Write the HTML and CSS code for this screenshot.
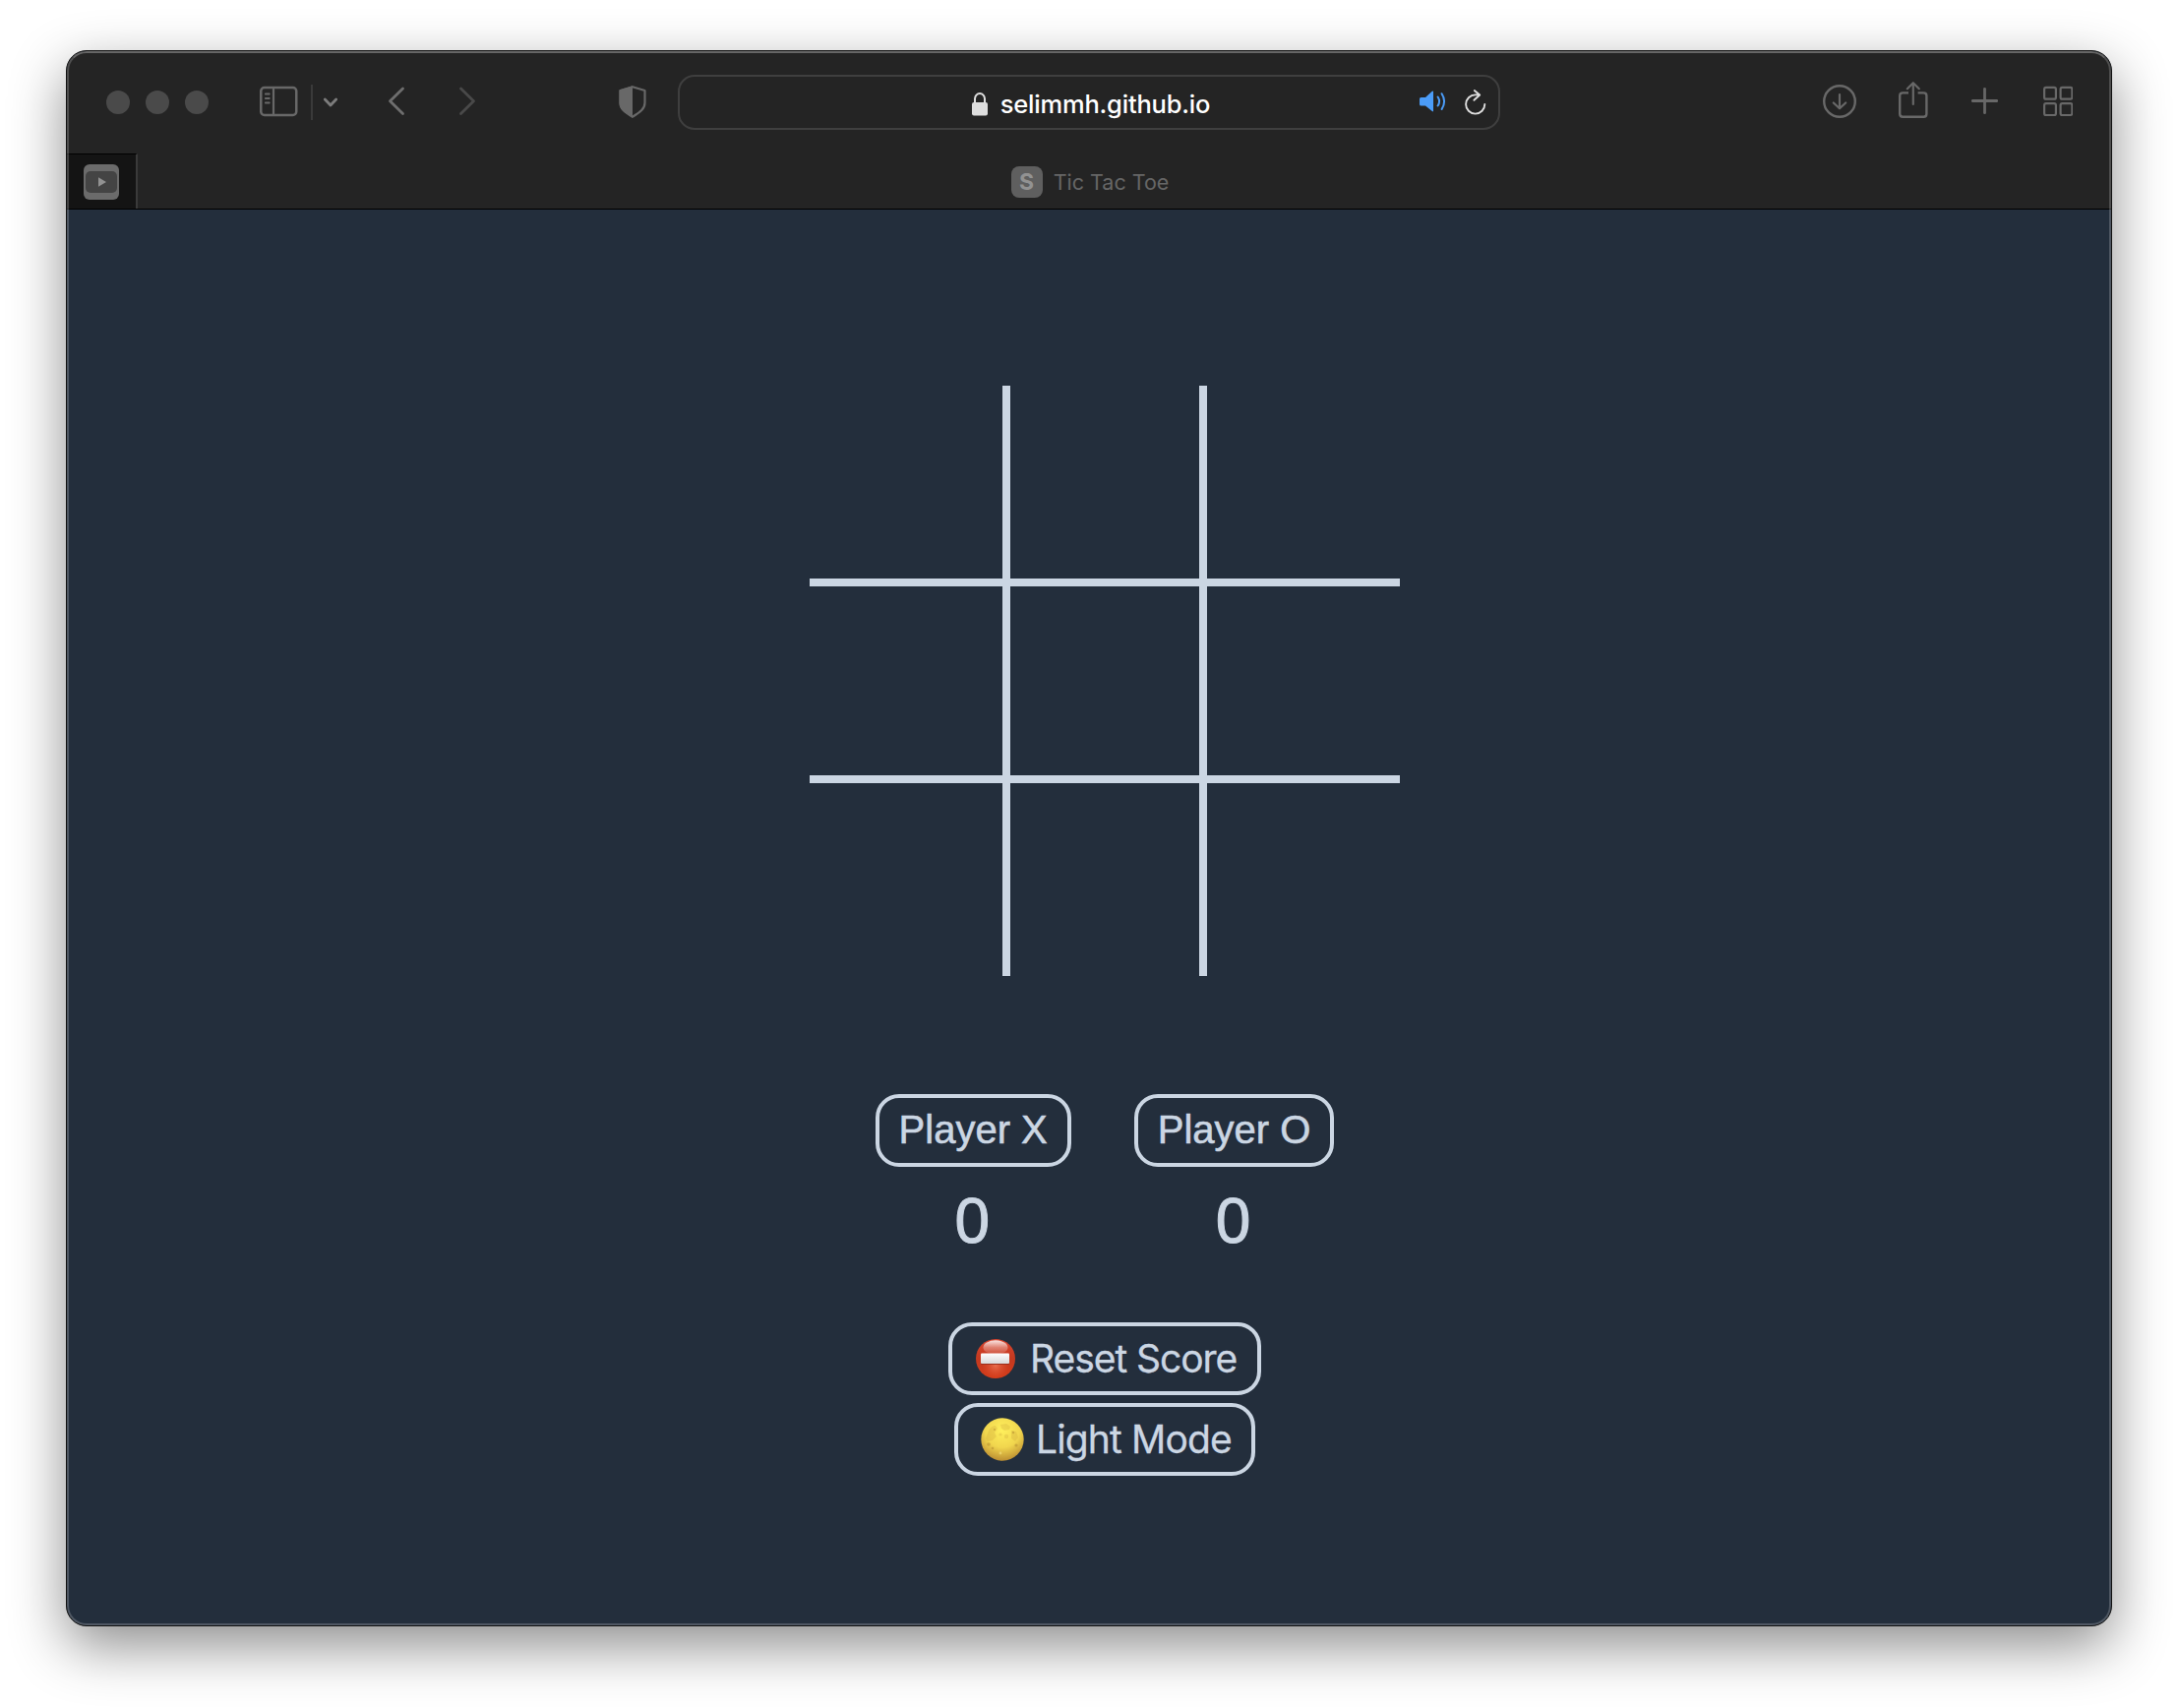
FILE: index.html
```html
<!DOCTYPE html>
<html lang="en">
<head>
<meta charset="utf-8">
<title>Tic Tac Toe</title>
<link rel="stylesheet" href="styles.css">
</head>
<body>
<div class="window">
  <header class="toolbar">
    <div class="lights"><span class="light"></span><span class="light"></span><span class="light"></span></div>
    <svg class="icon sidebar" width="39" height="48" viewBox="0 0 39 48">
      <rect x="1.25" y="9" width="36" height="28" rx="3.5" stroke-width="2.5"/>
      <path d="M14 9v28" stroke-width="2.2"/>
      <path d="M5.8 15.5h4M5.8 20h4M5.8 24.5h4" stroke-width="1.8"/>
    </svg>
    <span class="divider"></span>
    <svg class="icon chevron" width="16" height="48" viewBox="0 0 16 48"><path d="M2.3 21l5.7 6 5.7-6" stroke-width="2.8"/></svg>
    <svg class="icon back" width="18" height="48" viewBox="0 0 18 48"><path d="M15.500 10L2.500 22.800l13 12.800" stroke-width="2.800"/></svg>
    <svg class="icon forward" width="18" height="48" viewBox="0 0 18 48"><path d="M2.500 10l13 12.800-13 12.800" stroke-width="2.800"/></svg>
    <svg class="icon shield" width="28" height="48" viewBox="0 0 28 48">
      <path d="M14 8.300L26.500 12v12.500c0 6-4.500 9.500-12.500 14.200C6 34 1.500 30.500 1.500 24.500V12z" stroke-width="2.200"/>
      <path d="M14 7.300L.5 11.500v13C.5 31.500 6 35 14 39.800z" class="solid"/>
    </svg>
    <div class="address">
      <div class="site">
        <svg class="lock" width="16" height="24" viewBox="0 0 16 24">
          <rect y="10" width="16" height="13.500" rx="2"/>
          <path d="M3 11V6.500a5 5.500 0 0 1 10 0V11" fill="none" stroke="#dedede" stroke-width="2"/>
        </svg>
        <span class="url">selimmh.github.io</span>
      </div>
      <div class="actions">
        <svg class="sound" width="28" height="24" viewBox="0 0 28 24">
          <path d="M1.500 7H6l6.800-6.200Q14 .2 14 1.500v19Q14 22 12.800 21L6 15.500H1.500Q0 15.500 0 14V8.500Q0 7 1.500 7z" fill="#4b9cf8"/>
          <path d="M18.600 6.500q3 4.500 0 9M22.600 3.200q5 7.800 0 15.800" fill="none" stroke="#4b9cf8" stroke-width="2" stroke-linecap="round"/>
        </svg>
        <svg class="reload" width="22" height="28" viewBox="0 0 22 28">
          <path d="M20.300 16a9.600 9.600 0 1 1-9.600-9.600h4.200M9.800 2l5.400 4.500-5.800 5.300" fill="none" stroke="#dedede" stroke-width="1.900" stroke-linecap="round" stroke-linejoin="round"/>
        </svg>
      </div>
    </div>
    <svg class="icon download" width="34" height="48" viewBox="0 0 34 48">
      <circle cx="17" cy="23" r="15.800" stroke-width="2.400"/>
      <path d="M17 16v14M10.800 24.500l6.200 5.800 6.200-5.800" stroke-width="2.200"/>
    </svg>
    <svg class="icon share" width="30" height="48" viewBox="0 0 30 48">
      <path d="M10 14.400H4.200q-3 0-3 3V35.800q0 3 3 3H25.400q3 0 3-3V17.400q0-3-3-3H19.600" stroke-width="2.400" stroke-linecap="butt"/>
      <path d="M14.800 26V4.300M8.800 10.200l6-6 6 6" stroke-width="2.200"/>
    </svg>
    <svg class="icon plus" width="27" height="48" viewBox="0 0 27 48"><path d="M13.500 10.300v24.400M1.300 22.500h24.400" stroke-width="2.800"/></svg>
    <svg class="icon tiles" width="30" height="48" viewBox="0 0 30 48">
      <g stroke-width="2.200"><rect x="1.100" y="8.900" width="11.800" height="11.800" rx="1.800"/><rect x="17.600" y="8.900" width="11.800" height="11.800" rx="1.800"/><rect x="1.100" y="25.200" width="11.800" height="11.800" rx="1.800"/><rect x="17.600" y="25.200" width="11.800" height="11.800" rx="1.800"/></g>
    </svg>
  </header>
  <nav class="tabs">
    <div class="pinned">
      <svg width="36" height="36" viewBox="0 0 36 36">
        <rect width="36" height="36" rx="6" fill="#6b6b6b"/>
        <rect x="2" y="7" width="32" height="22" rx="5" fill="#444"/>
        <path d="M15 13.300v9.500l8-4.700z" fill="#929292"/>
      </svg>
    </div>
    <div class="tab"><span class="favicon">S</span><span class="title">Tic Tac Toe</span></div>
  </nav>
  <main class="page">
    <div class="board">
      <div class="cell"></div><div class="cell"></div><div class="cell"></div>
      <div class="cell"></div><div class="cell"></div><div class="cell"></div>
      <div class="cell"></div><div class="cell"></div><div class="cell"></div>
    </div>
    <div class="players">
      <div class="player"><div class="pill name">Player X</div><div class="score">0</div></div>
      <div class="player"><div class="pill name">Player O</div><div class="score">0</div></div>
    </div>
    <div class="controls">
      <button class="pill control reset">
        <svg width="40" height="40" viewBox="0 0 40 40">
          <defs>
            <linearGradient id="red" x1="0" y1="0" x2="0" y2="1"><stop offset="0" stop-color="#d8452f"/><stop offset=".5" stop-color="#c4391f"/><stop offset="1" stop-color="#d43c1a"/></linearGradient>
            <linearGradient id="gloss" x1="0" y1="0" x2="0" y2="1"><stop offset="0" stop-color="#fff" stop-opacity=".85"/><stop offset=".5" stop-color="#fff" stop-opacity=".35"/><stop offset="1" stop-color="#fff" stop-opacity=".08"/></linearGradient>
            <radialGradient id="glow" cx=".5" cy=".68" r=".36"><stop offset="0" stop-color="#f07a58" stop-opacity=".8"/><stop offset="1" stop-color="#e05030" stop-opacity="0"/></radialGradient>
            <linearGradient id="bar" x1="0" y1="0" x2="0" y2="1"><stop offset="0" stop-color="#fff"/><stop offset="1" stop-color="#d8d8d8"/></linearGradient>
          </defs>
          <circle cx="20" cy="20" r="20" fill="url(#red)"/>
          <circle cx="20" cy="20" r="19" fill="url(#glow)"/>
          <ellipse cx="20" cy="8.500" rx="12.500" ry="7.200" fill="url(#gloss)"/>
          <rect x="5" y="15.500" width="29" height="10.500" rx="1" fill="#9c2f1c"/>
          <rect x="5" y="14.500" width="29" height="10.500" rx="1" fill="url(#bar)"/>
        </svg>
        <span>Reset Score</span>
      </button>
      <button class="pill control mode">
        <svg width="44" height="44" viewBox="0 0 44 44">
          <defs><radialGradient id="moon" cx=".5" cy=".28" r=".74"><stop offset="0" stop-color="#fff05c"/><stop offset=".55" stop-color="#f1d64e"/><stop offset="1" stop-color="#b98a30"/></radialGradient></defs>
          <circle cx="22" cy="22" r="21.700" fill="url(#moon)"/>
          <g fill="#cfa93c" opacity=".3">
            <path d="M8 13q3-5 7-5l2 3-3 4 2 4-4 4-5 1-2-3z"/>
            <path d="M20 7l6-1 4 3-1 3-5 1-3-2zM31 13l5 1 2 6-3 4-4-3z"/>
            <circle cx="26" cy="19" r="2.200"/><circle cx="20" cy="17" r="1.600"/>
          </g>
          <g fill="#b38a30" opacity=".5">
            <circle cx="8" cy="27" r="1.800"/><circle cx="12" cy="31" r="1.300"/><circle cx="36" cy="28" r="1.600"/><circle cx="33" cy="15" r="1.200"/><circle cx="14" cy="12" r="1.100"/>
          </g>
          <circle cx="20" cy="36" r="1.400" fill="#fbe98a" opacity=".5"/>
        </svg>
        <span>Light Mode</span>
      </button>
    </div>
  </main>
</div>
</body>
</html>
```
FILE: styles.css
```css
* { box-sizing: border-box; }
html, body { margin: 0; height: 100%; }
body {
  background: #fff;
  padding: 51px 67px 83px;
  overflow: hidden;
  font-family: Inter, "Liberation Sans", sans-serif;
}
svg { display: block; flex: none; }

.window {
  position: relative;
  display: flex;
  flex-direction: column;
  width: 2080px;
  height: 1602px;
  border: 1px solid #101010;
  border-radius: 21px;
  background: #232e3c;
  overflow: hidden;
  box-shadow: 0 20px 56px rgba(0, 0, 0, .45);
}
/* light rim along the inside edge of the window */
.window::after {
  content: "";
  position: absolute;
  inset: 0;
  border: 2px solid rgba(255, 255, 255, .2);
  border-top-color: rgba(255, 255, 255, .3);
  border-radius: 20px;
  pointer-events: none;
}

.toolbar {
  display: flex;
  align-items: center;
  height: 104px;
  padding-left: 40px;
  background: #242424;
}
.lights { display: flex; gap: 16px; }
.light { width: 24px; height: 24px; border-radius: 50%; background: #4a4a4a; }
.icon { fill: none; stroke: #686868; stroke-linecap: round; stroke-linejoin: round; }
.icon .solid { fill: #686868; stroke: none; }
.sidebar { margin-left: 52px; }
.divider { width: 2px; height: 36px; margin-left: 13px; background: #3a3a3a; }
.chevron { margin-left: 10px; stroke: #7c7c7c; }
.back { margin-left: 50px; stroke: #6e6e6e; }
.forward { margin-left: 54px; stroke: #494949; }
.shield { margin-left: 145px; }
.download { margin-left: 328px; }
.share { margin-left: 43px; }
.plus { margin-left: 44px; }
.tiles { margin-left: 46px; }

.address {
  display: grid;
  grid-template-columns: 1fr auto 1fr;
  align-items: center;
  width: 836px;
  height: 56px;
  margin-left: 32px;
  border: 2px solid #3f3f3f;
  border-radius: 17px;
}
.site { grid-column: 2; display: flex; align-items: center; gap: 13px; padding: 3px 0 0 4px; }
.lock { fill: #dedede; }
.url { color: #fff; font-size: 25.500px; font-weight: 500; line-height: 32px; letter-spacing: -.2px; white-space: nowrap; }
.actions { display: flex; align-items: center; justify-content: flex-end; gap: 18px; padding-right: 12px; }

.tabs {
  display: flex;
  height: 57px;
  background: #242424;
  border-bottom: 1px solid #000;
}
.pinned {
  display: flex;
  align-items: center;
  width: 72px;
  padding-left: 17px;
  border-top: 1px solid #000;
  border-right: 2px solid #3a3a3a;
  background: #141414;
}
.tab { display: flex; flex: 1; align-items: center; justify-content: center; gap: 11px; padding: 2px 70px 0 0; }
.favicon {
  width: 32px;
  height: 32px;
  border-radius: 8px;
  background: #5f5f5f;
  color: #929292;
  font-size: 23px;
  font-weight: 700;
  line-height: 32px;
  text-align: center;
}
.title { color: #666; font-size: 21.500px; white-space: nowrap; }

.page {
  display: flex;
  flex: 1;
  flex-direction: column;
  align-items: center;
  padding: 179px 0 0 32px;
  color: #cbd6e3;
}
.board { display: grid; grid-template-columns: repeat(3, 200px); grid-template-rows: repeat(3, 200px); }
.cell { border: 0 solid #cbd6e3; }
.cell:not(:nth-child(3n)) { border-right-width: 4px; }
.cell:not(:nth-child(3n + 1)) { border-left-width: 4px; }
.cell:nth-child(-n + 6) { border-bottom-width: 4px; }
.cell:nth-child(n + 4) { border-top-width: 4px; }

.pill {
  height: 74px;
  border: 4px solid #cbd6e3;
  border-radius: 24px;
  background: none;
  color: #cbd6e3;
  font-size: 40px;
  white-space: nowrap;
}
.players { display: flex; gap: 64px; margin-top: 120px; font-family: "Liberation Sans", Arial, sans-serif; }
.player { display: flex; flex-direction: column; align-items: center; }
.name { padding: 0 20px; line-height: 64px; -webkit-text-stroke: .6px #cbd6e3; }
.score { margin-top: 18px; padding-right: 2px; font-size: 64px; line-height: 74px; -webkit-text-stroke: 1px #cbd6e3; }
.controls { display: flex; flex-direction: column; align-items: center; gap: 8px; margin-top: 66px; }
.control { display: flex; align-items: center; padding: 0; font-family: Inter, sans-serif; font-size: 39px; line-height: 60px; -webkit-text-stroke: .3px #cbd6e3; }
.reset { width: 318px; padding-left: 24px; letter-spacing: -1.050px; }
.reset span { margin-left: 15px; }
.mode { width: 306px; padding-left: 23px; letter-spacing: -.850px; }
.mode span { margin-left: 12px; }
```
